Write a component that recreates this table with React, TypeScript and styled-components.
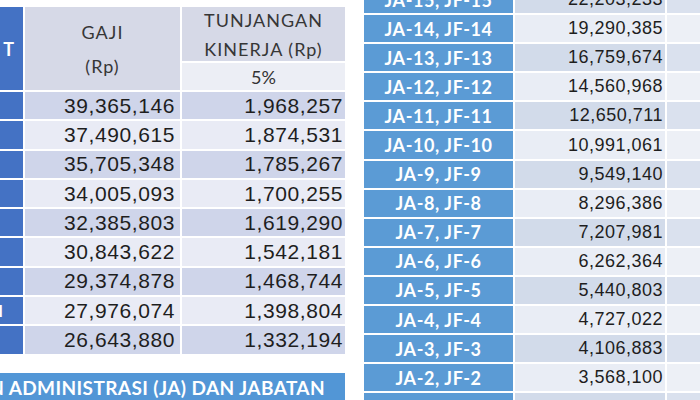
import React from 'react';
import styled, { createGlobalStyle } from 'styled-components';

const leftRows = [
  ['39,365,146', '1,968,257', ''],
  ['37,490,615', '1,874,531', ''],
  ['35,705,348', '1,785,267', ''],
  ['34,005,093', '1,700,255', ''],
  ['32,385,803', '1,619,290', ''],
  ['30,843,622', '1,542,181', ''],
  ['29,374,878', '1,468,744', ''],
  ['27,976,074', '1,398,804', 'I'],
  ['26,643,880', '1,332,194', ''],
];

const rightRows = [
  ['JA-15, JF-15', '22,203,233'],
  ['JA-14, JF-14', '19,290,385'],
  ['JA-13, JF-13', '16,759,674'],
  ['JA-12, JF-12', '14,560,968'],
  ['JA-11, JF-11', '12,650,711'],
  ['JA-10, JF-10', '10,991,061'],
  ['JA-9, JF-9', '9,549,140'],
  ['JA-8, JF-8', '8,296,386'],
  ['JA-7, JF-7', '7,207,981'],
  ['JA-6, JF-6', '6,262,364'],
  ['JA-5, JF-5', '5,440,803'],
  ['JA-4, JF-4', '4,727,022'],
  ['JA-3, JF-3', '4,106,883'],
  ['JA-2, JF-2', '3,568,100'],
  ['', ''],
];

const App = () => {
  return (
    <>
      <GlobalStyle />
      <Page>
        <LeftPanel>
          <LeftTable>
            <RankCell $head>PANGKAT</RankCell>
            <HeadCell $span>
              <span>GAJI</span>
              <span>(Rp)</span>
            </HeadCell>
            <HeadCell $tight>
              <span>TUNJANGAN</span>
              <span>KINERJA (Rp)</span>
            </HeadCell>
            <SubHead>5%</SubHead>
            {leftRows.map(([gaji, tunj, rank], i) => (
              <React.Fragment key={gaji}>
                <RankCell>{rank}</RankCell>
                <LeftValue $dark={i % 2 === 0} $pad={5}>{gaji}</LeftValue>
                <LeftValue $dark={i % 2 === 0} $pad={2}>{tunj}</LeftValue>
              </React.Fragment>
            ))}
          </LeftTable>
          <Banner>
            <span>JABATAN ADMINISTRASI (JA) DAN JABATAN</span>
          </Banner>
        </LeftPanel>

        <RightTable>
          {rightRows.map(([label, value], i) => (
            <React.Fragment key={i}>
              <GradeCell>{label}</GradeCell>
              <RightValue $dark={i % 2 === 0}>{value}</RightValue>
              <ExtraCell $dark={i % 2 === 0} />
            </React.Fragment>
          ))}
        </RightTable>
      </Page>
    </>
  );
};

const GlobalStyle = createGlobalStyle`
  html, body {
    margin: 0;
    padding: 0;
    background: #ffffff;
  }
  body {
    width: 700px;
    height: 400px;
    overflow: hidden;
    font-family: 'Liberation Sans', Arial, sans-serif;
  }
`;

const Page = styled.div`
  display: flex;
  align-items: flex-start;
  width: 700px;
  height: 400px;
  overflow: hidden;
`;

const LeftPanel = styled.div`
  width: 345px;
  flex-shrink: 0;
  padding-top: 7px;
  display: flex;
  flex-direction: column;
`;

const LeftTable = styled.div`
  display: grid;
  grid-template-columns: 23px 155px 163px;
  grid-template-rows: 54px 27px repeat(9, 27.3px);
  gap: 2px;
`;

const RankCell = styled.div<{ $head?: boolean }>`
  grid-row: ${(p) => (p.$head ? 'span 2' : 'auto')};
  background: #4472c4;
  color: #ffffff;
  font-family: Lato, 'Liberation Sans', sans-serif;
  font-weight: 700;
  font-size: ${(p) => (p.$head ? '18px' : '17px')};
  letter-spacing: ${(p) => (p.$head ? '9px' : '0')};
  display: flex;
  align-items: center;
  justify-content: flex-end;
  padding-right: ${(p) => (p.$head ? '0' : '20px')};
  overflow: hidden;
  white-space: nowrap;
`;

const HeadCell = styled.div<{ $span?: boolean; $tight?: boolean }>`
  grid-row: ${(p) => (p.$span ? 'span 2' : 'auto')};
  background: #d6d9e7;
  color: #363636;
  font-family: Lato, 'Liberation Sans', sans-serif;
  font-size: 18px;
  letter-spacing: 1px;
  display: flex;
  flex-direction: column;
  align-items: center;
  justify-content: flex-start;
  padding-top: ${(p) => (p.$tight ? '2px' : '14px')};
  gap: ${(p) => (p.$tight ? '7px' : '12px')};
  line-height: 22px;
`;

const SubHead = styled.div`
  background: #eceef5;
  color: #333333;
  font-family: Lato, 'Liberation Sans', sans-serif;
  font-size: 18px;
  display: flex;
  align-items: center;
  justify-content: center;
`;

const LeftValue = styled.div<{ $dark: boolean; $pad: number }>`
  background: ${(p) => (p.$dark ? '#cfd5ea' : '#e9ebf5')};
  color: #1e1e1e;
  font-size: 21px;
  letter-spacing: 0.6px;
  display: flex;
  align-items: center;
  justify-content: flex-end;
  padding-right: ${(p) => p.$pad}px;
`;

const Banner = styled.div`
  margin-top: 19px;
  height: 30px;
  background: #5296d6;
  color: #ffffff;
  font-family: Lato, 'Liberation Sans', sans-serif;
  font-weight: 700;
  font-size: 19px;
  letter-spacing: 0.4px;
  display: flex;
  align-items: center;
  justify-content: flex-end;
  padding-right: 20px;
  overflow: hidden;
  white-space: nowrap;
`;

const RightTable = styled.div`
  margin-left: 19px;
  margin-top: -14px;
  flex-shrink: 0;
  display: grid;
  grid-template-columns: 149px 150px 60px;
  grid-auto-rows: 27.1px;
  gap: 2px;
`;

const GradeCell = styled.div`
  background: #5b9bd5;
  color: #ffffff;
  font-family: Lato, 'Liberation Sans', sans-serif;
  font-weight: 700;
  font-size: 18px;
  letter-spacing: 0.6px;
  display: flex;
  align-items: center;
  justify-content: center;
  white-space: nowrap;
`;

const RightValue = styled.div<{ $dark: boolean }>`
  background: ${(p) => (p.$dark ? '#d2dbea' : '#e9edf5')};
  color: #1e1e1e;
  font-size: 18px;
  letter-spacing: 0.5px;
  display: flex;
  align-items: center;
  justify-content: flex-end;
  padding-right: 2px;
`;

const ExtraCell = styled.div<{ $dark: boolean }>`
  background: ${(p) => (p.$dark ? '#dae1ee' : '#edf0f6')};
`;

export default App;
